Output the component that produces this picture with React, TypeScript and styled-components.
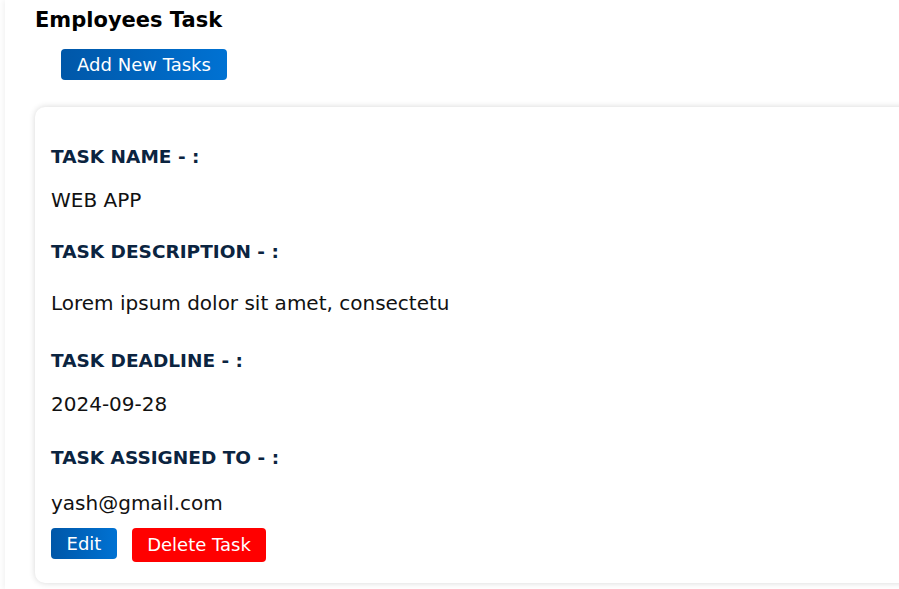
import React from "react";
import styled, { createGlobalStyle } from "styled-components";

const GlobalStyle = createGlobalStyle`
  html, body {
    margin: 0;
    padding: 0;
    background: #ffffff;
    overflow: hidden;
  }
  body {
    font-family: "DejaVu Sans", "Noto Sans", sans-serif;
  }
`;

const task = {
  name: "WEB APP",
  description: "Lorem ipsum dolor sit amet, consectetu",
  deadline: "2024-09-28",
  assignedTo: "yash@gmail.com",
};

export default function App() {
  return (
    <>
      <GlobalStyle />
      <Page>
        <Title>Employees Task</Title>
        <AddButton>Add New Tasks</AddButton>
        <Card>
          <Label $top={0}>TASK NAME - :</Label>
          <Value $top={20}>{task.name}</Value>
          <Label $top={29}>TASK DESCRIPTION - :</Label>
          <Value $top={28}>{task.description}</Value>
          <Label $top={35}>TASK DEADLINE - :</Label>
          <Value $top={20}>{task.deadline}</Value>
          <Label $top={31}>TASK ASSIGNED TO - :</Label>
          <Value $top={22}>{task.assignedTo}</Value>
          <Actions>
            <EditButton>Edit</EditButton>
            <DeleteButton>Delete Task</DeleteButton>
          </Actions>
        </Card>
      </Page>
    </>
  );
}

const Page = styled.div`
  margin-left: 5px;
  min-height: 589px;
  padding: 8px 0 0 30px;
  box-sizing: border-box;
  display: flex;
  flex-direction: column;
  align-items: flex-start;
  box-shadow: -2px 0 5px rgba(0, 0, 0, 0.05);
`;

const Title = styled.h2`
  margin: 0;
  font-size: 21px;
  line-height: 24px;
  font-weight: 700;
  color: #000000;
`;

const Button = styled.button`
  border: none;
  border-radius: 4px;
  color: #ffffff;
  font-family: inherit;
  font-size: 18px;
  line-height: 22px;
  padding: 0;
  cursor: pointer;
`;

const AddButton = styled(Button)`
  margin: 17px 0 0 26px;
  width: 166px;
  height: 31px;
  background: linear-gradient(90deg, #0057a8, #0072d3);
`;

const Card = styled.div`
  margin-top: 27px;
  width: 900px;
  padding: 39px 16px 21px;
  box-sizing: border-box;
  border-radius: 10px;
  background: #ffffff;
  box-shadow: 0 0 6px rgba(0, 0, 0, 0.16);
  display: flex;
  flex-direction: column;
  align-items: flex-start;
`;

const Label = styled.h4<{ $top: number }>`
  margin: ${(p) => p.$top}px 0 0;
  font-size: 18.5px;
  line-height: 22px;
  font-weight: 700;
  color: #0b2440;
`;

const Value = styled.p<{ $top: number }>`
  margin: ${(p) => p.$top}px 0 0;
  font-size: 20px;
  line-height: 24px;
  color: #111111;
`;

const Actions = styled.div`
  margin-top: 13px;
  display: flex;
  align-items: flex-start;
  gap: 15px;
`;

const EditButton = styled(Button)`
  width: 66px;
  height: 31px;
  background: linear-gradient(90deg, #0057a8, #0072d3);
`;

const DeleteButton = styled(Button)`
  width: 134px;
  height: 34px;
  background: #ff0000;
`;
